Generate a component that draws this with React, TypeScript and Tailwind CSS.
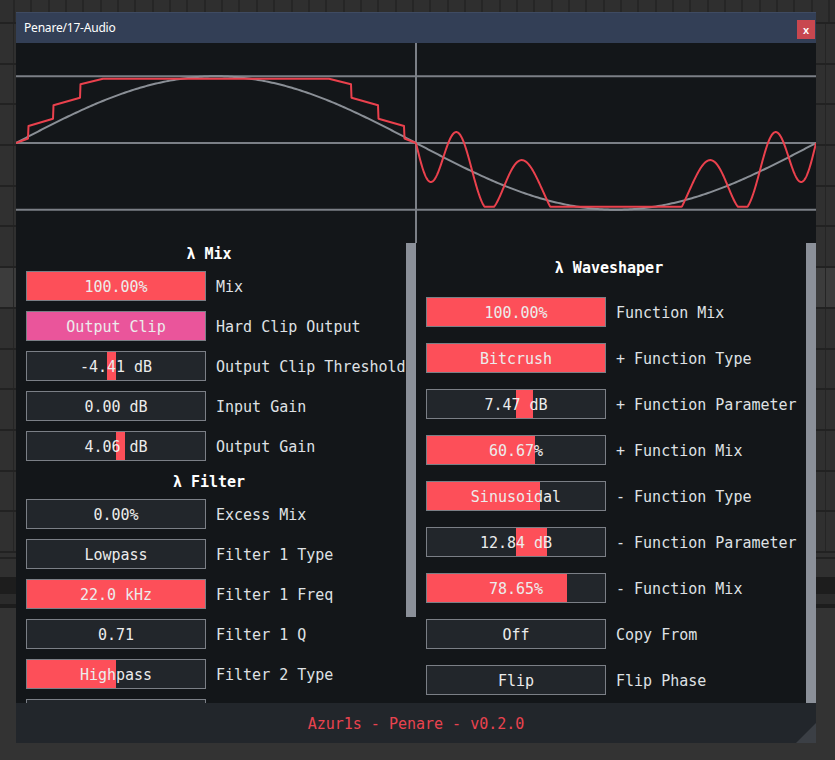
import React from "react";

const MONO = "font-['DejaVu_Sans_Mono','Liberation_Mono',monospace]";

type Param = {
  value: string;
  label: string;
  // fill range in px inside the 178px inner width
  fill?: [number, number];
  pink?: boolean;
};

const mixParams: Param[] = [
  { value: "100.00%", label: "Mix", fill: [0, 178] },
  { value: "Output Clip", label: "Hard Clip Output", fill: [0, 178], pink: true },
  { value: "-4.41 dB", label: "Output Clip Threshold", fill: [80, 89] },
  { value: "0.00 dB", label: "Input Gain" },
  { value: "4.06 dB", label: "Output Gain", fill: [89, 98] },
];

const filterParams: Param[] = [
  { value: "0.00%", label: "Excess Mix" },
  { value: "Lowpass", label: "Filter 1 Type" },
  { value: "22.0 kHz", label: "Filter 1 Freq", fill: [0, 178] },
  { value: "0.71", label: "Filter 1 Q" },
  { value: "Highpass", label: "Filter 2 Type", fill: [0, 89] },
  // scrolled out of view below the fold, only its top edge shows
  { value: "", label: "" },
];

const shaperParams: Param[] = [
  { value: "100.00%", label: "Function Mix", fill: [0, 178] },
  { value: "Bitcrush", label: "+ Function Type", fill: [0, 178] },
  { value: "7.47 dB", label: "+ Function Parameter", fill: [89, 106] },
  { value: "60.67%", label: "+ Function Mix", fill: [0, 108] },
  { value: "Sinusoidal", label: "- Function Type", fill: [0, 113] },
  { value: "12.84 dB", label: "- Function Parameter", fill: [89, 120] },
  { value: "78.65%", label: "- Function Mix", fill: [0, 140] },
  { value: "Off", label: "Copy From" },
  { value: "Flip", label: "Flip Phase" },
];

// waveform data (local coords, 800x200, centre line at y=100)
const AMP = 66.7;
const sinePts: string[] = [];
for (let x = 0; x <= 800; x += 2) {
  sinePts.push(`${x},${(100 - AMP * Math.sin((x / 400) * Math.PI)).toFixed(2)}`);
}

const crushPts =
  "0,100 12,95.5 12.5,83 37,75.7 37.5,62.3 64,54.7 64.5,41.3 87,35.7 313,35.7 335,41.3 335.5,54.7 362,62.3 362.5,75.7 388,83 388.5,95.5 400,100";

const shapedPts: string[] = [];
for (let x = 400; x <= 800; x += 0.5) {
  const u = Math.sin((x / 400) * Math.PI);
  let out = 0.475 * Math.sin(14.7 * u) + 0.984 * u;
  if (out < -0.955) out = -0.955;
  shapedPts.push(`${x},${(100 - AMP * out).toFixed(2)}`);
}

function ParamRow({ p }: { p: Param }) {
  return (
    <div className="flex items-center h-[30px] shrink-0">
      <div className="relative w-[180px] h-[30px] shrink-0 border border-[#7b7f86] bg-[#22262b]">
        {p.fill && (
          <div
            className={`absolute top-0 bottom-0 ${p.pink ? "bg-[#ea559b]" : "bg-[#fd4f59]"}`}
            style={{ left: p.fill[0], width: p.fill[1] - p.fill[0] }}
          />
        )}
        {p.value && (
          <div className="relative h-full pt-[2px] flex items-center justify-center text-[15px] text-[#ececec] whitespace-pre">
            {p.value}
          </div>
        )}
      </div>
      {p.label && (
        <span className="ml-[10px] pt-[2px] text-[15px] text-[#dfe1e4] whitespace-pre">{p.label}</span>
      )}
    </div>
  );
}

function Heading({ children }: { children: React.ReactNode }) {
  return (
    <div className="h-[20px] mr-[14px] pt-[1px] leading-[20px] text-center text-[15px] font-bold text-white shrink-0">
      {children}
    </div>
  );
}

function Waveform() {
  return (
    <svg width="800" height="200" viewBox="0 0 800 200" className="block shrink-0">
      <rect width="800" height="200" fill="#131619" />
      <g stroke="#7b7f86" strokeWidth="2">
        <line x1="0" y1="33.3" x2="800" y2="33.3" />
        <line x1="0" y1="100" x2="800" y2="100" />
        <line x1="0" y1="166.7" x2="800" y2="166.7" />
        <line x1="400" y1="0" x2="400" y2="200" />
      </g>
      <polyline points={sinePts.join(" ")} fill="none" stroke="#8a8f96" strokeWidth="2" />
      <polyline points={crushPts} fill="none" stroke="#ea414d" strokeWidth="2" strokeLinejoin="round" />
      <polyline points={shapedPts.join(" ")} fill="none" stroke="#ea414d" strokeWidth="2" strokeLinejoin="round" />
    </svg>
  );
}

function Backdrop() {
  const rows = Array.from({ length: 13 }, (_, i) => i);
  const keys = Array.from({ length: 48 }, (_, i) => i);
  return (
    <div className="flex flex-col w-full h-full">
      <div className="flex h-[22px] bg-[#2f2f2f] shrink-0">
        <div className="w-[13px] shrink-0" />
        {keys.map((k) => (
          <div key={k} className="w-[17.35px] shrink-0 border-l-2 border-[#262626]" />
        ))}
      </div>
      {rows.map((r) => (
        <div
          key={r}
          className={`flex h-[40.7px] shrink-0 border-t-2 border-[#222222] ${r === 6 ? "bg-[#3c3c3c]" : "bg-[#303030]"}`}
        >
          <div className="w-[13px] shrink-0" />
          <div className="flex-1 border-l border-r border-[#252525]" />
          <div className="w-[9px] shrink-0" />
        </div>
      ))}
      <div className="h-[6px] shrink-0 border-t-2 border-[#222222] bg-[#303030]" />
      <div className="h-[20px] shrink-0 border-t-2 border-[#222222] bg-[#303030]" />
      <div className="h-[17px] shrink-0 bg-[#1d1d1d]" />
      <div className="h-[10px] shrink-0 bg-[#2b2b2b]" />
      <div className="h-[4px] shrink-0 bg-[#1d1d1d]" />
      <div className="flex-1 bg-[#333333]" />
    </div>
  );
}

export default function App() {
  return (
    <div className={`relative w-[835px] h-[760px] overflow-hidden bg-[#333333] ${MONO}`}>
      <Backdrop />

      <div className="absolute left-[16px] top-[12px] w-[800px] flex flex-col">
        {/* title bar */}
        <div className="h-[31px] flex items-center justify-between bg-[#333f56] border-t border-[#3f4b62] pl-[8px] pr-[1px]">
          <span className="text-[12px] text-white font-['Noto_Sans','Open_Sans',sans-serif] tracking-[-0.2px]">
            Penare/17-Audio
          </span>
          <div className="self-end mb-[4px] w-[18px] h-[19px] bg-[#c8474f] flex items-center justify-center text-[11px] text-white font-['Noto_Sans',sans-serif] font-semibold leading-none">
            x
          </div>
        </div>

        <Waveform />

        {/* parameter panels */}
        <div className="h-[460px] flex bg-[#131619]">
          <div className="w-[400px] flex">
            <div className="flex-1 overflow-hidden pl-[10px] flex flex-col">
              <Heading>λ Mix</Heading>
              <div className="mt-[8px] flex flex-col gap-[10px]">
                {mixParams.map((p) => (
                  <ParamRow key={p.label} p={p} />
                ))}
              </div>
              <div className="mt-[10px]">
                <Heading>λ Filter</Heading>
              </div>
              <div className="mt-[8px] flex flex-col gap-[10px]">
                {filterParams.map((p, i) => (
                  <ParamRow key={i} p={p} />
                ))}
              </div>
            </div>
            <div className="w-[10px] shrink-0">
              <div className="h-[374px] bg-[#8b9099]" />
            </div>
          </div>

          <div className="w-[400px] flex">
            <div className="flex-1 overflow-hidden pl-[10px] pt-[14px] flex flex-col">
              <Heading>λ Waveshaper</Heading>
              <div className="mt-[20px] flex flex-col gap-[16px]">
                {shaperParams.map((p) => (
                  <ParamRow key={p.label} p={p} />
                ))}
              </div>
            </div>
            <div className="w-[10px] shrink-0 bg-[#8b9099]" />
          </div>
        </div>

        {/* footer */}
        <div className="relative h-[40px] pt-[2px] bg-[#22262b] flex items-center justify-center">
          <span className="text-[15px] text-[#e9434f] whitespace-pre">Azur1s - Penare - v0.2.0</span>
          <svg width="20" height="20" viewBox="0 0 20 20" className="absolute right-0 bottom-0">
            <polygon points="20,0 20,20 0,20" fill="#3b3f45" />
          </svg>
        </div>
      </div>
    </div>
  );
}
